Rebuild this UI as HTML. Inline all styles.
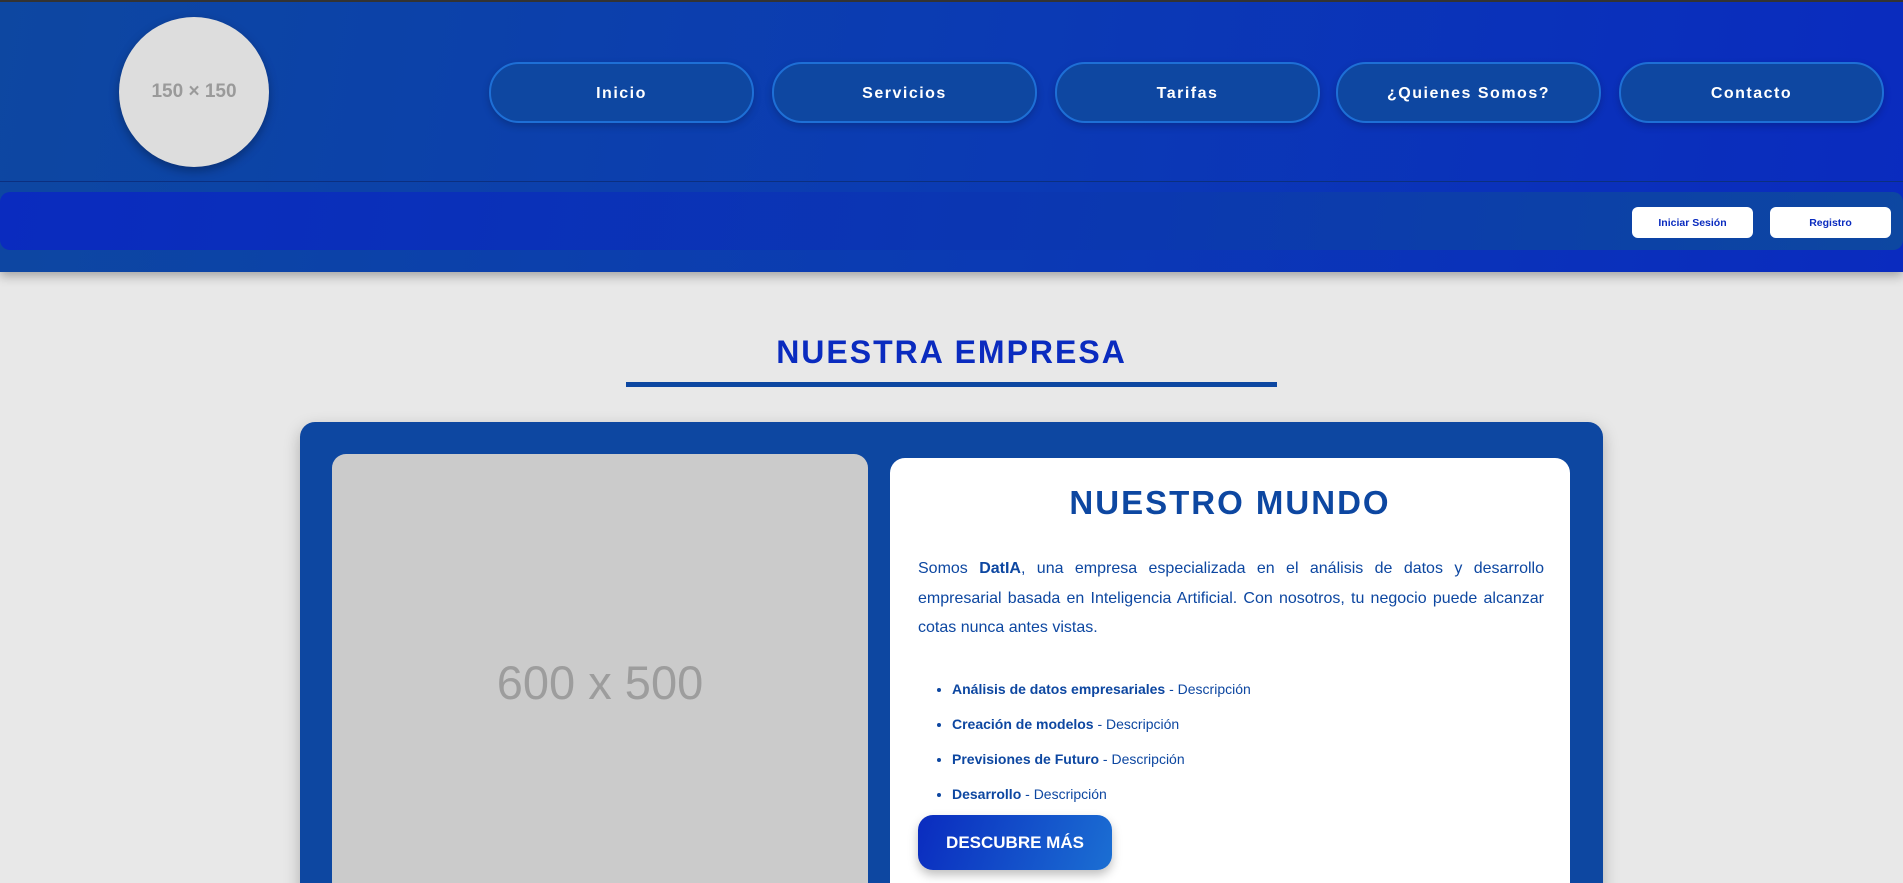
<!DOCTYPE html>
<html><head><meta charset="utf-8"><style>
*{margin:0;padding:0;box-sizing:border-box}
html,body{width:1903px;height:883px;overflow:hidden;background:#e8e8e8;font-family:"Liberation Sans",Arial,sans-serif}
#wrap{position:relative;width:1903px;height:883px;overflow:hidden}
.hdr{position:absolute;left:0;top:0;width:1903px;height:272px;background:linear-gradient(100deg,#0d47a1 0%,#0b3bb3 50%,#0a2bbf 100%);box-shadow:0 4px 10px rgba(0,0,0,.3);border-top:2px solid #333}
.logo{position:absolute;left:119px;top:15px;width:150px;height:150px;border-radius:50%;background:#dddddd;box-shadow:0 4px 10px rgba(0,0,0,.3);color:#9a9a9a;font-weight:bold;font-size:19px;display:flex;align-items:center;justify-content:center}
.nav a{position:absolute;top:60px;height:61px;width:265px;border:2px solid #1e6fd6;border-radius:30px;background:#0e47a1;color:#fff;font-weight:bold;font-size:16px;letter-spacing:1.5px;display:flex;align-items:center;justify-content:center;box-shadow:0 3px 8px rgba(0,0,0,.2);padding-top:2px}
.line{position:absolute;left:0;top:179px;width:1903px;height:1px;background:#0b2f80}
.bar{position:absolute;left:0;top:190px;width:1903px;height:58px;border-radius:10px;background:linear-gradient(100deg,#0a2bbf 0%,#0b38b0 60%,#0d47a1 100%)}
.bar span{position:absolute;top:15px;width:121px;height:31px;background:#fff;border-radius:6px;color:#0a2bbf;font-weight:bold;font-size:10.5px;display:flex;align-items:center;justify-content:center}
h2{position:absolute;left:0;width:1903px;top:334px;text-align:center;color:#0a2bbf;font-size:32px;letter-spacing:2px;font-weight:bold}
.ul{position:absolute;left:626px;top:382px;width:651px;height:5px;background:#0d47a1}
.card{position:absolute;left:300px;top:422px;width:1303px;height:600px;background:#0d47a1;border-radius:15px;box-shadow:0 6px 16px rgba(0,0,0,.25)}
.img{position:absolute;left:332px;top:454px;width:536px;height:600px;background:#cbcbcb;border-radius:14px;color:#9d9d9d;font-size:47px;text-align:center;padding-top:201px}
.wc{position:absolute;left:890px;top:458px;width:680px;height:600px;background:#fff;border-radius:15px;color:#0d47a1}
.wc h3{text-align:center;font-size:33px;letter-spacing:2px;margin-top:26px;font-weight:bold}
.wc p{position:absolute;left:28px;top:96px;width:626px;font-size:16px;line-height:29.5px;text-align:justify}
.wc ul{position:absolute;left:62px;top:214px;font-size:14px;line-height:35px}
.btn{position:absolute;left:28px;top:357px;width:194px;height:55px;border-radius:15px;background:linear-gradient(110deg,#0a2bbf,#1b6fd3);color:#fff;font-weight:bold;font-size:17px;display:flex;align-items:center;justify-content:center;box-shadow:0 5px 10px rgba(0,0,0,.25)}
</style></head><body><div id="wrap">
<div class="hdr">
<div class="logo">150 × 150</div>
<div class="nav">
<a style="left:489px">Inicio</a><a style="left:772px">Servicios</a><a style="left:1055px">Tarifas</a><a style="left:1336px">¿Quienes Somos?</a><a style="left:1619px">Contacto</a>
</div>
<div class="line"></div>
<div class="bar"><span style="left:1632px">Iniciar Sesión</span><span style="left:1770px">Registro</span></div>
</div>
<h2>NUESTRA EMPRESA</h2>
<div class="ul"></div>
<div class="card"></div>
<div class="img">600 x 500</div>
<div class="wc">
<h3>NUESTRO MUNDO</h3>
<p>Somos <b>DatIA</b>, una empresa especializada en el análisis de datos y desarrollo empresarial basada en Inteligencia Artificial. Con nosotros, tu negocio puede alcanzar cotas nunca antes vistas.</p>
<ul>
<li><b>Análisis de datos empresariales</b> - Descripción</li>
<li><b>Creación de modelos</b> - Descripción</li>
<li><b>Previsiones de Futuro</b> - Descripción</li>
<li><b>Desarrollo</b> - Descripción</li>
</ul>
<div class="btn">DESCUBRE MÁS</div>
</div>
</div></body></html>
